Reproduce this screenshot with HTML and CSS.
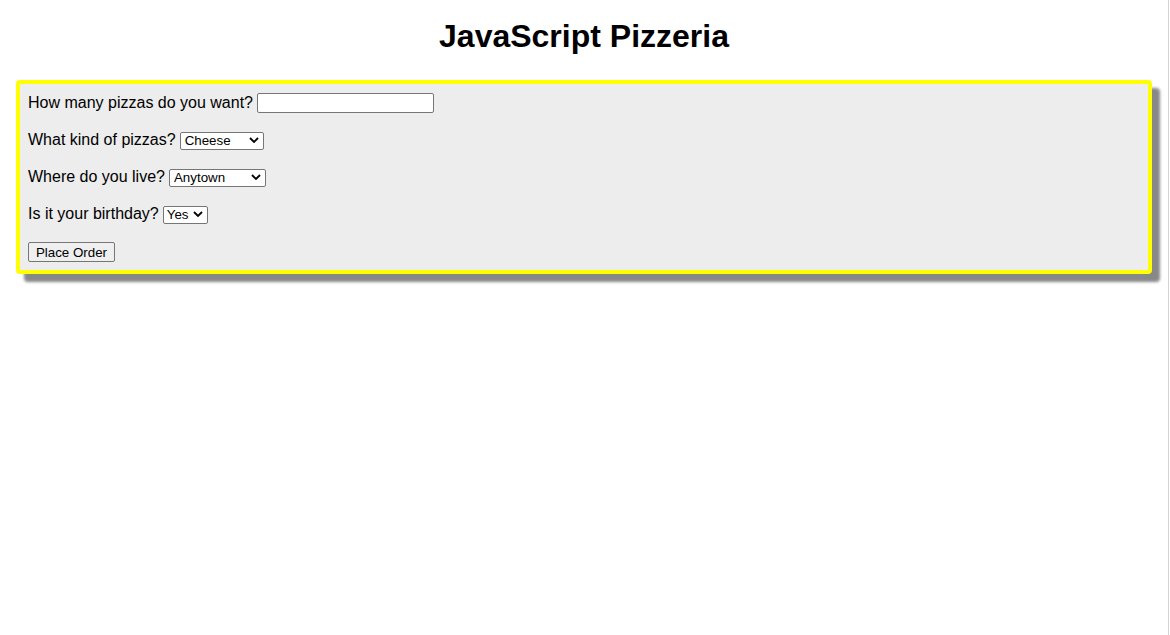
FILE: index.html
```html
<!DOCTYPE html>
<html lang="en">
<head>
<meta charset="utf-8">
<title>JavaScript Pizzeria</title>
<link rel="stylesheet" href="styles.css">
</head>
<body>
<div class="page">
  <h1 class="title">JavaScript Pizzeria</h1>
  <form class="order">
    <div class="row">
      <label for="qty">How many pizzas do you want?</label>
      <input id="qty" class="field text" type="text">
    </div>
    <div class="row">
      <label for="kind">What kind of pizzas?</label>
      <span class="sel w-kind">
        <select id="kind" class="field"><option>Cheese</option><option>Pepperoni</option><option>Supreme</option></select>
        <svg class="chev" viewBox="0 0 10 6" width="10" height="6"><path d="M1 1 L5 5 L9 1" fill="none" stroke="#000" stroke-width="1.8"/></svg>
      </span>
    </div>
    <div class="row">
      <label for="town">Where do you live?</label>
      <span class="sel w-town">
        <select id="town" class="field"><option>Anytown</option><option>Beachville</option><option>Mountainview</option></select>
        <svg class="chev" viewBox="0 0 10 6" width="10" height="6"><path d="M1 1 L5 5 L9 1" fill="none" stroke="#000" stroke-width="1.8"/></svg>
      </span>
    </div>
    <div class="row">
      <label for="bday">Is it your birthday?</label>
      <span class="sel w-bday">
        <select id="bday" class="field"><option>Yes</option><option>No</option></select>
        <svg class="chev" viewBox="0 0 10 6" width="10" height="6"><path d="M1 1 L5 5 L9 1" fill="none" stroke="#000" stroke-width="1.8"/></svg>
      </span>
    </div>
    <div class="row row-last">
      <button type="button" class="btn">Place Order</button>
    </div>
  </form>
</div>
</body>
</html>
```

FILE: styles.css
```css
html {
  background: #fff;
}
body {
  margin: 0;
  font-family: "Liberation Sans", Arial, sans-serif;
  color: #000;
}
body::after {
  content: "";
  position: fixed;
  top: 0;
  right: 1px;
  width: 1px;
  height: 100%;
  background: #d4d4d4;
}
.page {
  width: 1168px;
  padding: 0 16px 40px;
  box-sizing: border-box;
}
.title {
  margin: 18px 0 25px;
  text-align: center;
  font-size: 32px;
  font-weight: bold;
  line-height: 37px;
}
.order {
  background: #ededed;
  border: 4px solid #ffff00;
  border-radius: 4px;
  box-shadow: 8px 8px 3px #888;
  padding: 8px;
  display: flex;
  flex-direction: column;
  gap: 16px;
}
.row {
  display: flex;
  align-items: center;
  gap: 4px;
  height: 21px;
  font-size: 16px;
}
.row label {
  line-height: 21px;
}
.row-last {
  height: 22px;
  align-items: flex-end;
}
.field {
  font-family: "Liberation Sans", Arial, sans-serif;
  font-size: 13.33px;
  color: #000;
  background: #fff;
  border: 1px solid #767676;
  border-radius: 2px;
  box-sizing: border-box;
  margin: 0;
}
.text {
  width: 177px;
  height: 20px;
  padding: 1px 2px;
}
.sel {
  position: relative;
  display: inline-block;
  height: 18px;
}
.sel select {
  appearance: none;
  -webkit-appearance: none;
  width: 100%;
  height: 18px;
  padding: 0 0 0 4px;
  line-height: 16px;
}
.chev {
  position: absolute;
  right: 5px;
  top: 6px;
  pointer-events: none;
}
.w-kind { width: 84px; }
.w-town { width: 97px; }
.w-bday { width: 45px; }
.w-bday select { padding-left: 3px; }
.btn {
  font-family: "Liberation Sans", Arial, sans-serif;
  font-size: 13.33px;
  color: #000;
  background: #efefef;
  border: 1px solid #767676;
  border-radius: 2px;
  width: 87px;
  height: 20px;
  padding: 0;
  margin: 0;
}
```
